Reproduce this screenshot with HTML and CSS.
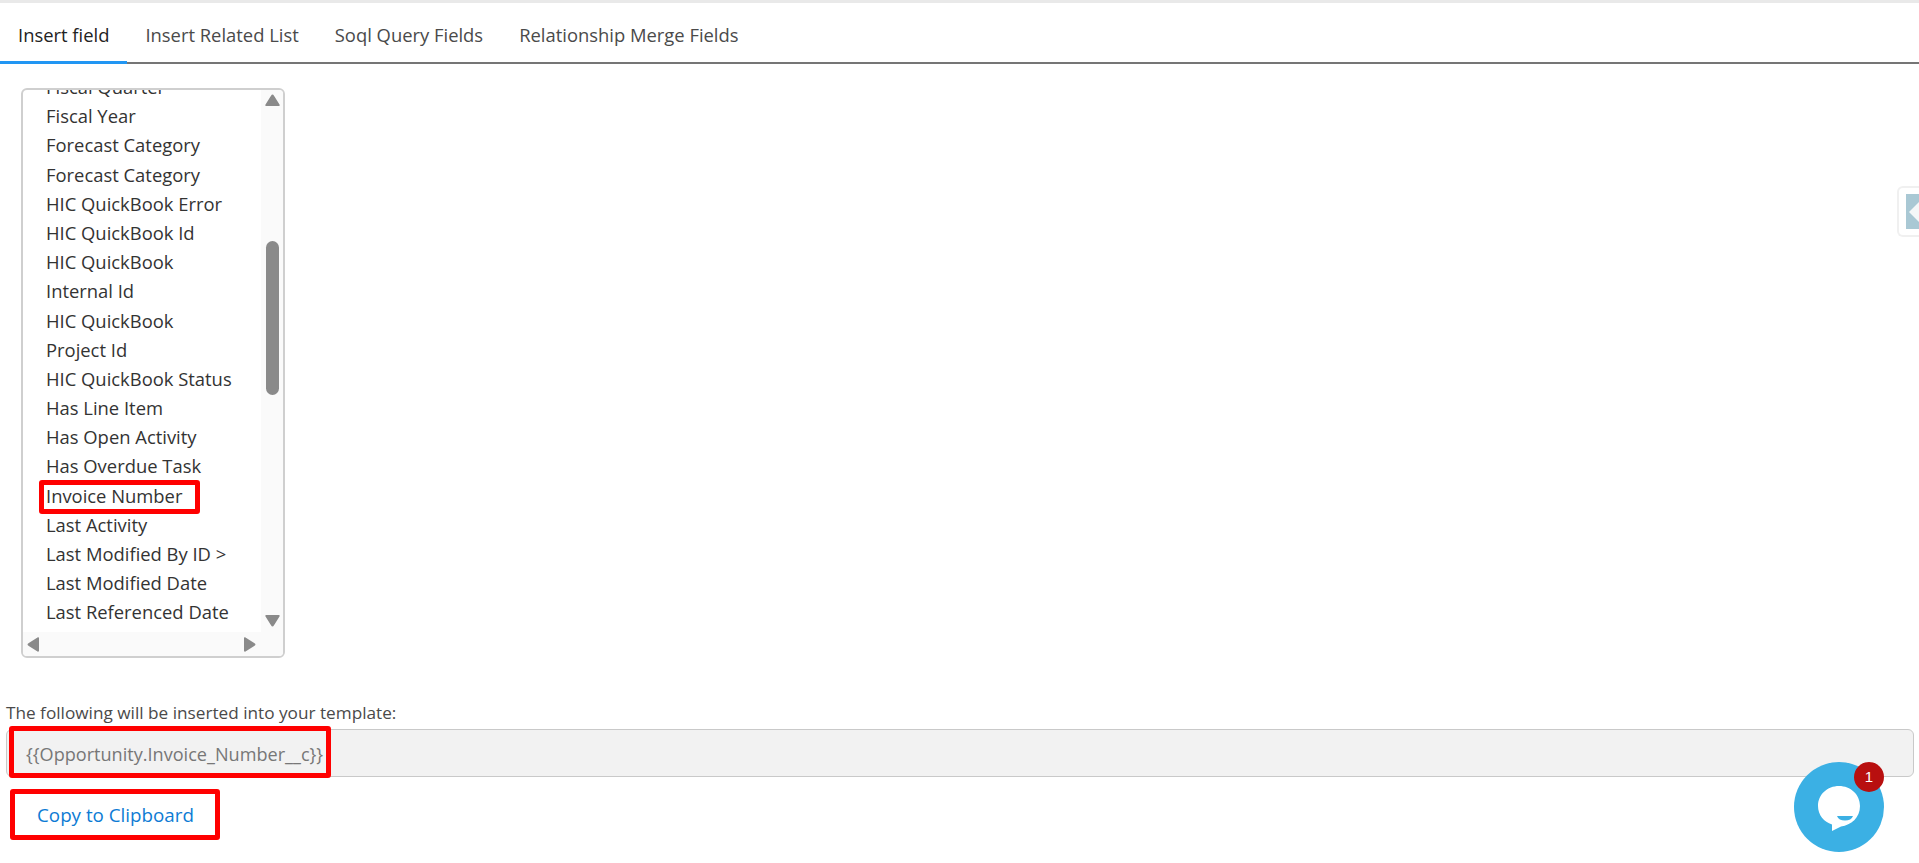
FILE: index.html
```html
<!DOCTYPE html>
<html lang="en">
<head>
<meta charset="utf-8">
<title>Insert field</title>
<link rel="stylesheet" href="styles.css">
</head>
<body>
<div class="topline"></div>
<nav class="tabs">
  <a class="tab active">Insert field</a>
  <a class="tab">Insert Related List</a>
  <a class="tab">Soql Query Fields</a>
  <a class="tab">Relationship Merge Fields</a>
</nav>
<main class="content">
  <div class="listbox">
    <div class="viewport">
      <ul class="fields">
        <li>Fiscal Quarter</li>
        <li>Fiscal Year</li>
        <li>Forecast Category</li>
        <li>Forecast Category</li>
        <li>HIC QuickBook Error</li>
        <li>HIC QuickBook Id</li>
        <li>HIC QuickBook</li>
        <li>Internal Id</li>
        <li>HIC QuickBook</li>
        <li>Project Id</li>
        <li>HIC QuickBook Status</li>
        <li>Has Line Item</li>
        <li>Has Open Activity</li>
        <li>Has Overdue Task</li>
        <li class="marked">Invoice Number</li>
        <li>Last Activity</li>
        <li>Last Modified By ID &gt;</li>
        <li>Last Modified Date</li>
        <li>Last Referenced Date</li>
      </ul>
    </div>
    <div class="vbar">
      <svg class="arrow" width="15" height="12" viewBox="0 0 15 12"><path d="M7.500 .5C8 .5 8.500 1 9 1.800L14.500 10.500C15 11.500 14.500 12 13.500 12H1.500C.5 12 0 11.500 .5 10.500L6 1.800C6.500 1 7 .5 7.500 .5Z"/></svg>
      <div class="vtrack"><div class="vthumb"></div></div>
      <svg class="arrow" width="15" height="12" viewBox="0 0 15 12"><path d="M7.500 11.500C8 11.500 8.500 11 9 10.200L14.500 1.500C15 .5 14.500 0 13.500 0H1.500C.5 0 0 .5 .5 1.500L6 10.200C6.500 11 7 11.500 7.500 11.500Z"/></svg>
    </div>
    <div class="hbar">
      <svg class="arrow" width="12" height="15" viewBox="0 0 12 15"><path d="M.5 7.500C.5 7 1 6.500 1.800 6L10.500 .5C11.500 0 12 .5 12 1.500V13.500C12 14.500 11.500 15 10.500 14.500L1.800 9C1 8.500 .5 8 .5 7.500Z"/></svg>
      <svg class="arrow" width="12" height="15" viewBox="0 0 12 15"><path d="M11.500 7.500C11.500 7 11 6.500 10.200 6L1.500 .5C.5 0 0 .5 0 1.500V13.500C0 14.500 .5 15 1.500 14.500L10.200 9C11 8.500 11.500 8 11.500 7.500Z"/></svg>
    </div>
  </div>
  <p class="hint">The following will be inserted into your template:</p>
  <div class="output">
    <div class="field">{{Opportunity.Invoice_Number__c}}</div>
    <div class="mark mark-field"></div>
  </div>
  <div class="actions">
    <button class="copy" type="button">Copy to Clipboard</button>
    <div class="mark mark-copy"></div>
  </div>
</main>
<div class="sidetab"><div class="sidetab-inner"><svg width="14" height="28" viewBox="0 0 14 28"><path d="M0 14 14 0V28Z" fill="#f4f7f8"/></svg></div></div>
<div class="chat">
  <svg width="42" height="46" viewBox="0 0 42 46"><path d="M21 1C9.400 1 0 9.500 0 21c0 9 6 16 14 18.500V46l9-4.500C33 40 42 33 42 21 42 9.500 32.600 1 21 1Z" fill="#fff"/><path d="M19 31h16c-1 3-4 4.500-8 4.500S20 34 19 31Z" fill="#3bb0e4"/></svg>
  <span class="badge">1</span>
</div>
</body>
</html>
```
FILE: styles.css
```css
*, *::before { box-sizing: border-box; }
html, body { margin: 0; padding: 0; height: 100%; overflow: hidden; }
body { background: #fff; font-family: "Open Sans", "Noto Sans", sans-serif; color: #333; position: relative; }
.topline { height: 3px; background: #e9e9e9; }
.tabs { display: flex; height: 61px; border-bottom: 2px solid #757575; }
.tab { display: flex; align-items: center; height: 61px; padding: 1px 18px 0; font-size: 18.4px; color: #4a4a4a; }
.tab.active { color: #222; border-bottom: 3px solid #2196f3; padding-top: 4px; }
.content { padding: 24px 5px 0 6px; }
.listbox { display: grid; grid-template-columns: 1fr 22px; grid-template-rows: 1fr 24px; width: 264px; height: 570px; margin-left: 15px; border: 2px solid #cfcfcf; border-radius: 6px; overflow: hidden; }
.viewport { overflow: hidden; }
.fields { list-style: none; margin: -18px 0 0; padding: 0 0 0 23px; font-size: 18.4px; color: #333; }
.fields li { height: 29.2px; line-height: 29.2px; white-space: nowrap; position: relative; }
.marked::before { content: ""; position: absolute; left: -7px; top: -1px; width: 161px; height: 34px; border: 5px solid #f00; border-radius: 3px; }
.vbar { display: flex; flex-direction: column; align-items: center; background: #fafafa; padding: 4px 0 5px; grid-row: 1; grid-column: 2; }
.arrow { fill: #8a8a8a; flex: none; }
.vtrack { flex: 1; width: 100%; padding-top: 135px; display: flex; justify-content: center; }
.vthumb { width: 13px; height: 154px; border-radius: 7px; background: #8a8a8a; }
.hbar { grid-column: 1 / 3; display: flex; justify-content: space-between; align-items: center; background: #fafafa; padding: 0 27px 0 4px; }
.hint { margin: 44px 0 0; font-size: 17.2px; line-height: 22px; color: #4a4a4a; }
.output { position: relative; margin-top: 5px; }
.field { height: 48px; line-height: 48px; padding-left: 19px; background: #f2f2f2; border: 1px solid #c9c9c9; border-radius: 6px; font-size: 18.1px; color: #777; }
.actions { position: relative; margin-top: 12px; }
.copy { height: 51px; width: 219px; background: #fff; border: 0; padding: 0; font-family: inherit; font-size: 18.8px; color: #0d7bd4; }
.mark { position: absolute; border: 5px solid #f00; border-radius: 3px; }
.mark-field { left: 3px; top: -3px; width: 322px; height: 52px; }
.mark-copy { left: 4px; top: 0; width: 210px; height: 51px; }
.sidetab { position: absolute; right: 0; top: 186px; width: 22px; height: 51px; padding: 6px 0 6px 7px; background: #fff; border: 2px solid #f0f0f0; border-right: 0; border-radius: 6px 0 0 6px; }
.sidetab-inner { height: 100%; background: #a9c8d4; display: flex; align-items: center; overflow: hidden; padding-left: 3px; }
.chat { position: absolute; left: 1794px; top: 762px; width: 90px; height: 90px; border-radius: 50%; background: #3bb0e4; display: flex; align-items: center; justify-content: center; padding-top: 1px; }
.badge { position: absolute; left: 60px; top: 0; width: 30px; height: 30px; border-radius: 50%; background: #b80f0f; color: #fff; font-family: "Liberation Sans", sans-serif; font-size: 15px; line-height: 30px; text-align: center; }
```
